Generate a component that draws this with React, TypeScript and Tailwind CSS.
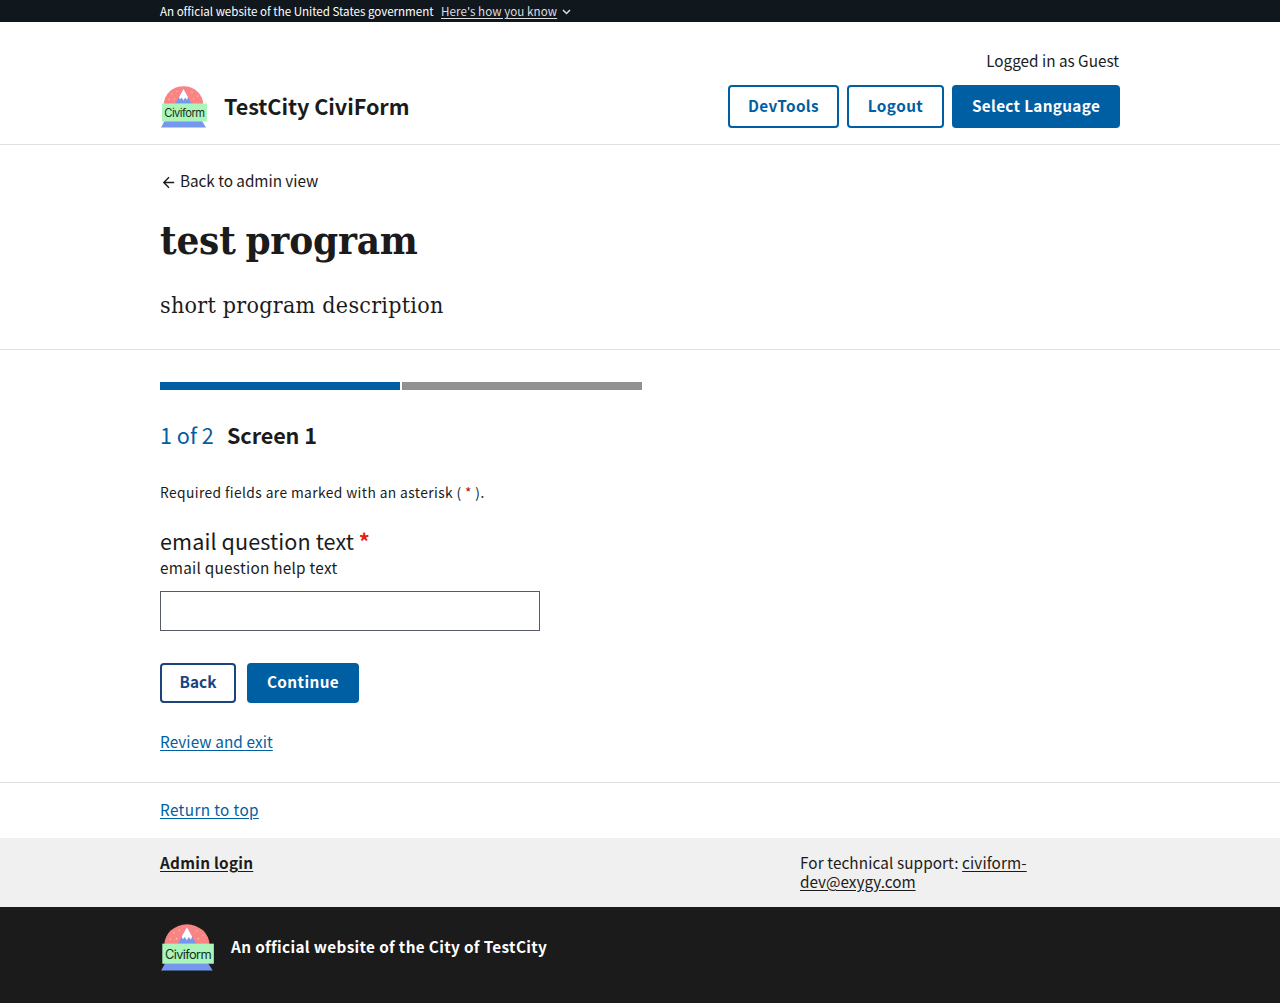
import React from "react";

function Logo({ className }: { className: string }) {
  return (
    <svg className={className} viewBox="0 0 48 43" preserveAspectRatio="none" aria-label="CiviForm logo">
      <path d="M3.800 19.500A19.700 18.300 0 0 1 43.200 19.500Z" fill="#fa8383" />
      <path d="M23.500 4 31.500 18.500H15.500Z" fill="#7597ef" />
      <path d="M23.500 4 28 12.200 27 15 25.200 12.600 23.400 15.400 21.700 12.600 20 14.500 19 12.200Z" fill="#fff" />
      <g fill="#fcc3bd">
        {[[12, 9], [17, 6.5], [9, 14.5], [14.500, 14], [32, 7], [37.500, 11], [33.500, 14]].map(([x, y]) => (
          <circle key={`${x}-${y}`} cx={x} cy={y} r="0.7" />
        ))}
      </g>
      <path d="M4.500 36H42L46 42.500H1Z" fill="#7597ef" />
      <rect x="2" y="18.500" width="45" height="18" fill="#abf4ba" />
      <text x="4.300" y="31.900" fontFamily="Inter, sans-serif" fontSize="11.200" textLength="40.800" fill="#17301d">
        Civiform
      </text>
    </svg>
  );
}

const buttonBase = "flex items-center justify-center rounded text-[15.3px] font-bold leading-4 whitespace-nowrap";

export default function App() {
  return (
    <div className="h-[1003px] overflow-hidden bg-white font-['Noto_Sans_CJK_SC',sans-serif] text-[15.3px] text-[#1b1b1b]">
      <section className="h-[22px] bg-[#11181d]">
        <div className="mx-auto flex h-[22px] w-[960px] items-center text-[11.6px] leading-[22px] text-white">
          <span className="w-[281px] whitespace-nowrap tracking-[-0.03px]">An official website of the United States government</span>
          <button className="tracking-[0.06px] text-[#dcdee0] underline underline-offset-2 whitespace-nowrap">Here's how you know</button>
          <svg className="ml-[5px] mt-0.5 h-2 w-[9px]" viewBox="0 0 9 8" fill="none" stroke="#dcdee0" strokeWidth="1.5">
            <path d="m1 2 3.500 3.500L8 2" />
          </svg>
        </div>
      </section>

      <header className="h-[123px] border-b border-[#dfe1e2]">
        <div className="mx-auto flex h-[122px] w-[960px] justify-between">
          <div className="mt-[63px] flex h-[43px] items-center">
            <Logo className="h-[43px] w-12" />
            <span className="ml-4 pb-0.5 text-[21.6px] font-bold leading-8 tracking-[-0.05px]">TestCity CiviForm</span>
          </div>
          <div className="pt-7">
            <div className="h-[35px] pr-px text-right leading-5">Logged in as Guest</div>
            <div className="flex gap-2">
              <button className={`${buttonBase} h-[43px] w-[111px] border-2 border-[#005ea2] pb-[3px] tracking-[0.35px] text-[#005ea2]`}>DevTools</button>
              <button className={`${buttonBase} h-[43px] w-[97px] border-2 border-[#005ea2] pb-[3px] tracking-[0.45px] text-[#005ea2]`}>Logout</button>
              <button className={`${buttonBase} h-[43px] w-[168px] bg-[#005ea2] pb-[3px] tracking-[0.33px] text-white`}>Select Language</button>
            </div>
          </div>
        </div>
      </header>

      <section className="h-[205px] border-b border-[#dfe1e2]">
        <div className="mx-auto w-[960px] pt-[25px]">
          <a className="flex h-5 items-center leading-5 tracking-[-0.03px]">
            <svg className="mr-[3px] mt-1 h-[17px] w-[17px]" viewBox="0 0 24 24" fill="#1b1b1b">
              <path d="M20 11H7.830l5.590-5.590L12 4l-8 8 8 8 1.410-1.410L7.830 13H20v-2z" />
            </svg>
            Back to admin view
          </a>
          <h1 className="mt-[25px] h-[50px] font-['DejaVu_Serif_Condensed','DejaVu_Serif',serif] text-[40px] font-bold leading-[50px] tracking-[-0.2px] [word-spacing:-2.500px]">test program</h1>
          <p className="mt-5 h-10 font-['DejaVu_Serif_Condensed','DejaVu_Serif',serif] text-[23px] leading-10 tracking-[0.28px]">short program description</p>
        </div>
      </section>

      <main className="h-[433px] border-b border-[#dfe1e2]">
        <div className="mx-auto w-[960px] pt-8">
          <div className="flex gap-0.5">
            <div className="h-2 w-60 bg-[#005ea2]" />
            <div className="h-2 w-60 bg-[#919191]" />
          </div>
          <h2 className="mt-[29px] flex h-8 items-center text-[21.6px] leading-8">
            <span className="w-[67px] text-[#005ea2]">1 of 2</span>
            <span className="font-bold tracking-[-0.1px]">Screen 1</span>
          </h2>
          <p className="mt-[31px] h-5 text-[13.8px] leading-5 tracking-[0.39px]">
            Required fields are marked with an asterisk ( <span className="text-[#b50909]">*</span> ).
          </p>
          <label className="mt-[23px] block h-8 text-[21.6px] leading-8 tracking-[0.09px]">
            email question text <span className="font-bold text-[#e52207]">*</span>
          </label>
          <div className="h-5 leading-5 tracking-[0.26px]">email question help text</div>
          <input className="mt-3.5 block h-10 w-[380px] border border-[#565c65]" />
          <div className="mt-8 flex gap-[11px]">
            <button className={`${buttonBase} h-10 w-[76px] border-2 border-[#1a4480] pb-1 text-[#1a4480]`}>Back</button>
            <button className={`${buttonBase} h-10 w-28 bg-[#005ea2] pb-1 tracking-[0.4px] text-white`}>Continue</button>
          </div>
          <a className="mt-7 block h-5 leading-5 tracking-[0.1px] text-[#005ea2] underline underline-offset-2">Review and exit</a>
        </div>
      </main>

      <footer>
        <div className="mx-auto h-[55px] w-[960px] pt-4">
          <a className="block h-5 leading-5 tracking-[0.37px] text-[#005ea2] underline underline-offset-2">Return to top</a>
        </div>
        <div className="h-[69px] bg-[#f0f0f0]">
          <div className="mx-auto flex w-[960px] pt-[15px] leading-[19px]">
            <a className="w-[640px] font-bold tracking-[0.27px] underline underline-offset-2">Admin login</a>
            <div className="whitespace-nowrap">
              <div className="tracking-[0.1px]">
                For technical support: <a className="underline underline-offset-2">civiform-</a>
              </div>
              <a className="block underline underline-offset-2">dev@exygy.com</a>
            </div>
          </div>
        </div>
        <div className="h-24 bg-[#1b1b1b]">
          <div className="mx-auto flex w-[960px] pt-4">
            <Logo className="h-12 w-[55px]" />
            <span className="ml-4 mt-[13px] font-bold leading-5 tracking-[0.35px] text-white">An official website of the City of TestCity</span>
          </div>
        </div>
      </footer>
    </div>
  );
}
